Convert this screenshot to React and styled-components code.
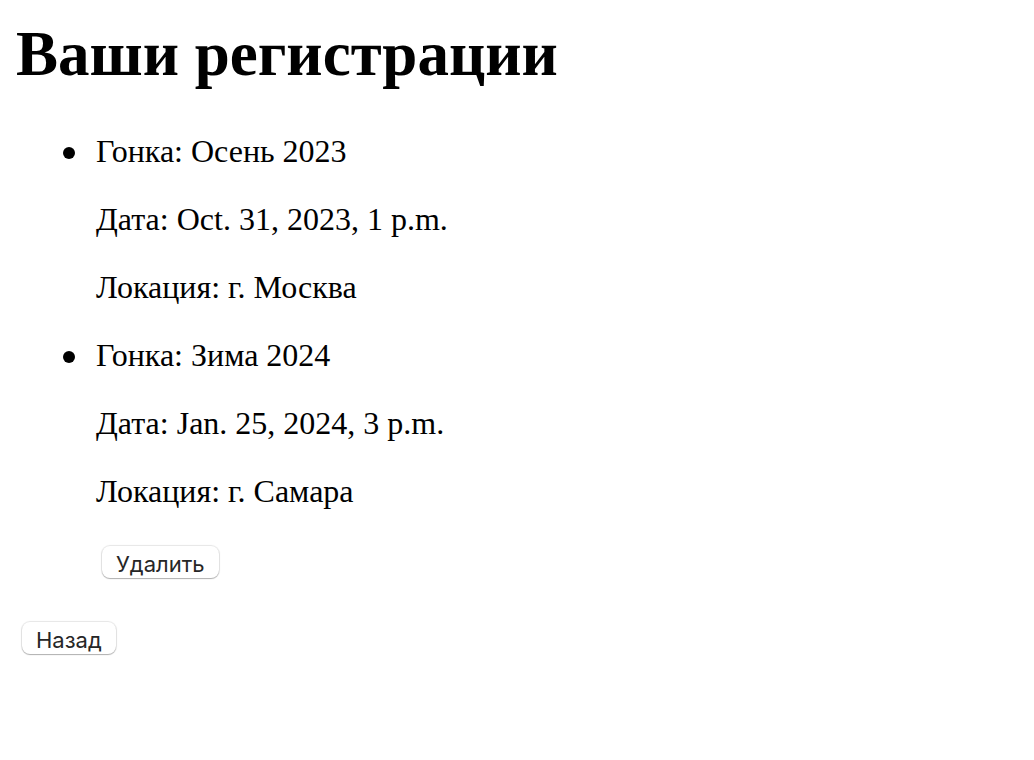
import React from "react";
import styled, { createGlobalStyle } from "styled-components";

const GlobalStyle = createGlobalStyle`
  body {
    margin: 0;
    background: #fff;
    color: #000;
    font-family: "Liberation Serif", "Times New Roman", serif;
    font-size: 32px;
    line-height: 36px;
  }
`;

const Page = styled.main`
  padding: 16px;
`;

const Title = styled.h1`
  margin: 0 0 40px;
  font-size: 63px;
  line-height: 77px;
  font-weight: 700;
`;

const RaceList = styled.ul`
  margin: 0 0 35px;
  padding: 0 0 0 80px;
  list-style: none;
`;

const Race = styled.li`
  position: relative;

  &::before {
    content: "";
    position: absolute;
    left: -33px;
    top: 14px;
    width: 12px;
    height: 12px;
    border-radius: 50%;
    background: #000;
  }
`;

const Detail = styled.p`
  margin: 0 0 32px;
`;

const Actions = styled.div`
  display: flex;
  padding: 5px 6px 4px;
`;

const Button = styled.button`
  box-sizing: border-box;
  height: 32px;
  margin: 0;
  padding: 4px 14px 0;
  border: 0;
  border-radius: 8px;
  background: #fff;
  color: #262626;
  box-shadow: 0 0 1px 1px rgba(0, 0, 0, 0.1), 0 1px 1px rgba(0, 0, 0, 0.24);
  font-family: Inter, sans-serif;
  font-size: 22px;
  line-height: 28px;
`;

const registrations = [
  { race: "Осень 2023", date: "Oct. 31, 2023, 1 p.m.", place: "г. Москва" },
  { race: "Зима 2024", date: "Jan. 25, 2024, 3 p.m.", place: "г. Самара", removable: true },
];

export default function App() {
  return (
    <>
      <GlobalStyle />
      <Page>
        <Title>Ваши регистрации</Title>
        <RaceList>
          {registrations.map((item) => (
            <Race key={item.race}>
              <Detail>Гонка: {item.race}</Detail>
              <Detail>Дата: {item.date}</Detail>
              <Detail>Локация: {item.place}</Detail>
              {item.removable && (
                <Actions>
                  <Button type="button">Удалить</Button>
                </Actions>
              )}
            </Race>
          ))}
        </RaceList>
        <Actions>
          <Button type="button">Назад</Button>
        </Actions>
      </Page>
    </>
  );
}
